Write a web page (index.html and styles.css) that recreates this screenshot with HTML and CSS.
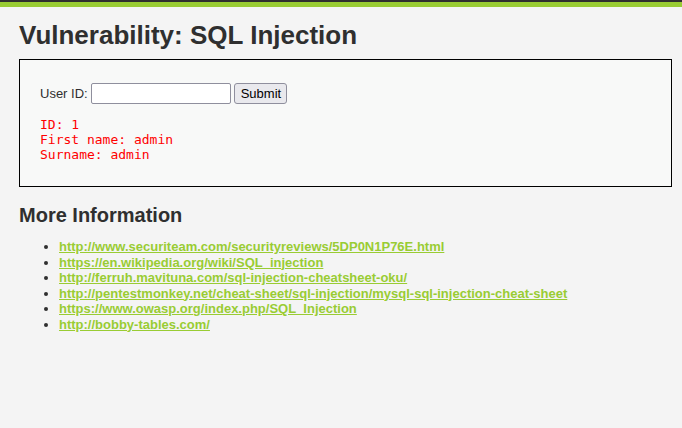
FILE: index.html
```html
<!DOCTYPE html>
<html>
<head>
<meta charset="utf-8">
<link rel="stylesheet" href="styles.css">
</head>
<body>
<div class="topbar"></div>
<div class="main">
  <h1 class="title">Vulnerability: SQL Injection</h1>
  <div class="vuln-area">
    <form class="form">
      <p class="row">User ID: <input type="text" class="field"> <input type="submit" class="btn" value="Submit"></p>
    </form>
    <pre class="result">ID: 1
First name: admin
Surname: admin</pre>
  </div>
  <h2 class="subtitle">More Information</h2>
  <ul class="links">
    <li><a href="#">http://www.securiteam.com/securityreviews/5DP0N1P76E.html</a></li>
    <li><a href="#">https://en.wikipedia.org/wiki/SQL_injection</a></li>
    <li><a href="#">http://ferruh.mavituna.com/sql-injection-cheatsheet-oku/</a></li>
    <li><a href="#">http://pentestmonkey.net/cheat-sheet/sql-injection/mysql-sql-injection-cheat-sheet</a></li>
    <li><a href="#">https://www.owasp.org/index.php/SQL_Injection</a></li>
    <li><a href="#">http://bobby-tables.com/</a></li>
  </ul>
</div>
</body>
</html>
```
FILE: styles.css
```css
html, body {
  margin: 0;
  padding: 0;
  background: #f4f4f4;
  color: #2f2f2f;
  font-family: "Liberation Sans", Arial, sans-serif;
  font-size: 13px;
}
.topbar {
  height: 5px;
  border-top: 2px solid #2f2f2f;
  background: #99cc33;
}
.main {
  padding: 0 10px 0 19px;
}
.title {
  margin: 0;
  padding-top: 13px;
  font-size: 26px;
  line-height: 30px;
  font-weight: bold;
  color: #2f2f2f;
}
.vuln-area {
  margin-top: 9px;
  border: 1px solid #000;
  background: #f8f9f8;
  padding: 0 20px;
  height: 126px;
}
.form {
  margin: 0;
}
.row {
  margin: 23px 0 0 0;
  display: flex;
  align-items: center;
  gap: 3px;
  font-size: 13px;
  color: #2f2f2f;
}
.field {
  width: 134px;
  height: 15px;
  margin: 0;
  border: 1px solid #8f8f9d;
  border-radius: 2px;
  background: #fff;
  padding: 2px;
}
.btn {
  height: 21px;
  margin: 0;
  padding: 0 5px 0 6px;
  border: 1px solid #8f8f9d;
  border-radius: 3px;
  background: #e9e9ed;
  font-family: "Liberation Sans", Arial, sans-serif;
  font-size: 13px;
  color: #000;
}
.result {
  margin: 13px 0 0 0;
  color: #ff0000;
  font-family: "DejaVu Sans Mono", monospace;
  font-size: 13px;
  line-height: 15px;
}
.subtitle {
  margin: 15px 0 0 0;
  font-size: 20px;
  line-height: 26px;
  font-weight: bold;
  color: #2f2f2f;
}
.links {
  margin: 11px 0 0 0;
  padding-left: 40px;
  list-style: disc;
  line-height: 15.5px;
}
.links a {
  color: #99cc33;
  font-weight: bold;
  text-decoration: underline;
}
```
